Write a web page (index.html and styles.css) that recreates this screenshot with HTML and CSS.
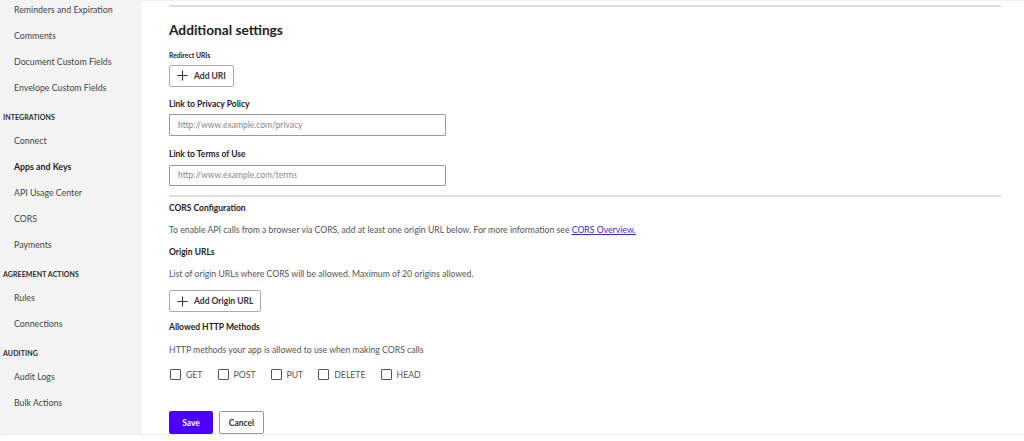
FILE: index.html
```html
<!DOCTYPE html>
<html>
<head>
<meta charset="utf-8">
<link rel="stylesheet" href="styles.css">
</head>
<body>
<div class="page">
  <aside class="sidebar">
    <nav class="nav">
      <a class="nav-item">Reminders and Expiration</a>
      <a class="nav-item">Comments</a>
      <a class="nav-item">Document Custom Fields</a>
      <a class="nav-item">Envelope Custom Fields</a>
      <div class="nav-head">INTEGRATIONS</div>
      <a class="nav-item">Connect</a>
      <a class="nav-item active">Apps and Keys</a>
      <a class="nav-item">API Usage Center</a>
      <a class="nav-item">CORS</a>
      <a class="nav-item">Payments</a>
      <div class="nav-head">AGREEMENT ACTIONS</div>
      <a class="nav-item">Rules</a>
      <a class="nav-item">Connections</a>
      <div class="nav-head">AUDITING</div>
      <a class="nav-item">Audit Logs</a>
      <a class="nav-item">Bulk Actions</a>
    </nav>
  </aside>
  <main class="main">
    <hr class="sep top">
    <h2 class="title">Additional settings</h2>
    <div class="tiny-label">Redirect URIs</div>
    <button class="btn-outline"><svg width="11" height="11" viewBox="0 0 11 11"><path d="M5.5 0.5v10M0.5 5.5h10" stroke="#333" stroke-width="1.1" fill="none"/></svg>Add URI</button>
    <div class="label l-privacy">Link to Privacy Policy</div>
    <input class="field f-privacy" type="text" placeholder="http://www.example.com/privacy">
    <div class="label l-terms">Link to Terms of Use</div>
    <input class="field f-terms" type="text" placeholder="http://www.example.com/terms">
    <hr class="sep mid">
    <div class="label l-cors">CORS Configuration</div>
    <p class="text">To enable API calls from a browser via CORS, add at least one origin URL below. For more information see <a class="link">CORS Overview.</a></p>
    <div class="label l-origin">Origin URLs</div>
    <p class="text">List of origin URLs where CORS will be allowed. Maximum of 20 origins allowed.</p>
    <button class="btn-outline origin"><svg width="11" height="11" viewBox="0 0 11 11"><path d="M5.5 0.5v10M0.5 5.5h10" stroke="#333" stroke-width="1.1" fill="none"/></svg>Add Origin URL</button>
    <div class="label l-methods">Allowed HTTP Methods</div>
    <p class="text t-methods">HTTP methods your app is allowed to use when making CORS calls</p>
    <div class="methods">
      <label class="check"><span class="box"></span>GET</label>
      <label class="check"><span class="box"></span>POST</label>
      <label class="check"><span class="box"></span>PUT</label>
      <label class="check"><span class="box"></span>DELETE</label>
      <label class="check"><span class="box"></span>HEAD</label>
    </div>
    <div class="actions">
      <button class="btn-primary">Save</button>
      <button class="btn-secondary">Cancel</button>
    </div>
  </main>
</div>
<footer class="footer"></footer>
</body>
</html>
```

FILE: styles.css
```css
html, body {
  margin: 0;
  padding: 0;
  height: 441px;
  overflow: hidden;
  background: #fff;
  font-family: Lato, "Open Sans", sans-serif;
  color: #333;
}
.page {
  display: flex;
  height: 434px;
}
.sidebar {
  width: 142px;
  flex: none;
  background: #f4f4f4;
  overflow: hidden;
}
.nav {
  margin-top: -3px;
  display: flex;
  flex-direction: column;
}
.nav-item {
  display: block;
  height: 26px;
  line-height: 26px;
  padding-left: 14px;
  font-size: 8.8px;
  color: #444;
}
.nav-item.active {
  font-weight: bold;
  color: #1e1e1e;
}
.nav-head {
  height: 27px;
  box-sizing: border-box;
  line-height: 10px;
  padding-left: 3px;
  padding-top: 11px;
  font-size: 7px;
  font-weight: bold;
  color: #2a2a2a;
  letter-spacing: 0.1px;
}
.main {
  flex: 1;
  padding: 0 23px 0 27px;
  border-top: 1px solid #f0f0f0;
  display: flex;
  flex-direction: column;
  align-items: flex-start;
}
.sep {
  align-self: stretch;
  border: 0;
  height: 2px;
  background: #dedede;
  margin: 0;
}
.sep.top { margin-top: 4px; }
.title {
  margin: 14px 0 0;
  font-size: 13.7px;
  line-height: 18px;
  font-weight: bold;
  color: #222;
}
.tiny-label {
  margin-top: 11px;
  font-size: 6.8px;
  line-height: 10px;
  font-weight: bold;
  color: #222;
}
.btn-outline {
  margin-top: 5px;
  height: 22px;
  padding: 0 7px 0 7px;
  border: 1px solid #aaa;
  border-radius: 2px;
  background: #fff;
  font-family: inherit;
  font-size: 8.5px;
  font-weight: bold;
  color: #333;
  display: flex;
  align-items: center;
  gap: 6px;
}
.btn-outline svg { display: block; }
.label {
  font-size: 8.5px;
  line-height: 12px;
  font-weight: bold;
  color: #222;
}
.l-privacy { margin-top: 11px; }
.l-terms { margin-top: 12px; }
.field {
  width: 277px;
  height: 22px;
  box-sizing: border-box;
  border: 1px solid #999;
  border-radius: 1px;
  padding: 0 8px;
  font-family: inherit;
  font-size: 8.5px;
  color: #333;
}
.f-privacy { margin-top: 4px; }
.f-terms { margin-top: 5px; }
.field::placeholder { color: #888; }
.sep.mid { margin-top: 9px; }
.l-cors { margin-top: 5px; }
.text {
  margin: 10px 0 0;
  font-size: 8.7px;
  line-height: 12px;
  color: #555;
}
.text.t-methods { margin-top: 11px; }
.link {
  color: #3a2bd8;
  text-decoration: underline;
}
.l-origin { margin-top: 10px; }
.btn-outline.origin { margin-top: 10px; }
.l-methods { margin-top: 9px; }
.methods {
  margin-top: 13px;
  display: flex;
}
.check {
  display: flex;
  align-items: center;
  font-size: 8.7px;
  color: #555;
  margin-right: 14px;
  padding-left: 1px;
}
.box {
  width: 11px;
  height: 11px;
  box-sizing: border-box;
  border: 1px solid #555;
  border-radius: 1px;
  margin-right: 5px;
}
.actions {
  margin-top: 31px;
  display: flex;
  gap: 6px;
}
.btn-primary {
  height: 23px;
  width: 44px;
  border: 0;
  border-radius: 2px;
  background: #4c00ff;
  color: #fff;
  font-family: inherit;
  font-size: 8.5px;
  font-weight: bold;
}
.btn-secondary {
  height: 23px;
  width: 45px;
  border: 1px solid #999;
  border-radius: 2px;
  background: #fff;
  color: #333;
  font-family: inherit;
  font-size: 8.5px;
  font-weight: bold;
}
.footer {
  border-top: 1px dotted #ddd;
  height: 6px;
  background: #fff;
}
```
